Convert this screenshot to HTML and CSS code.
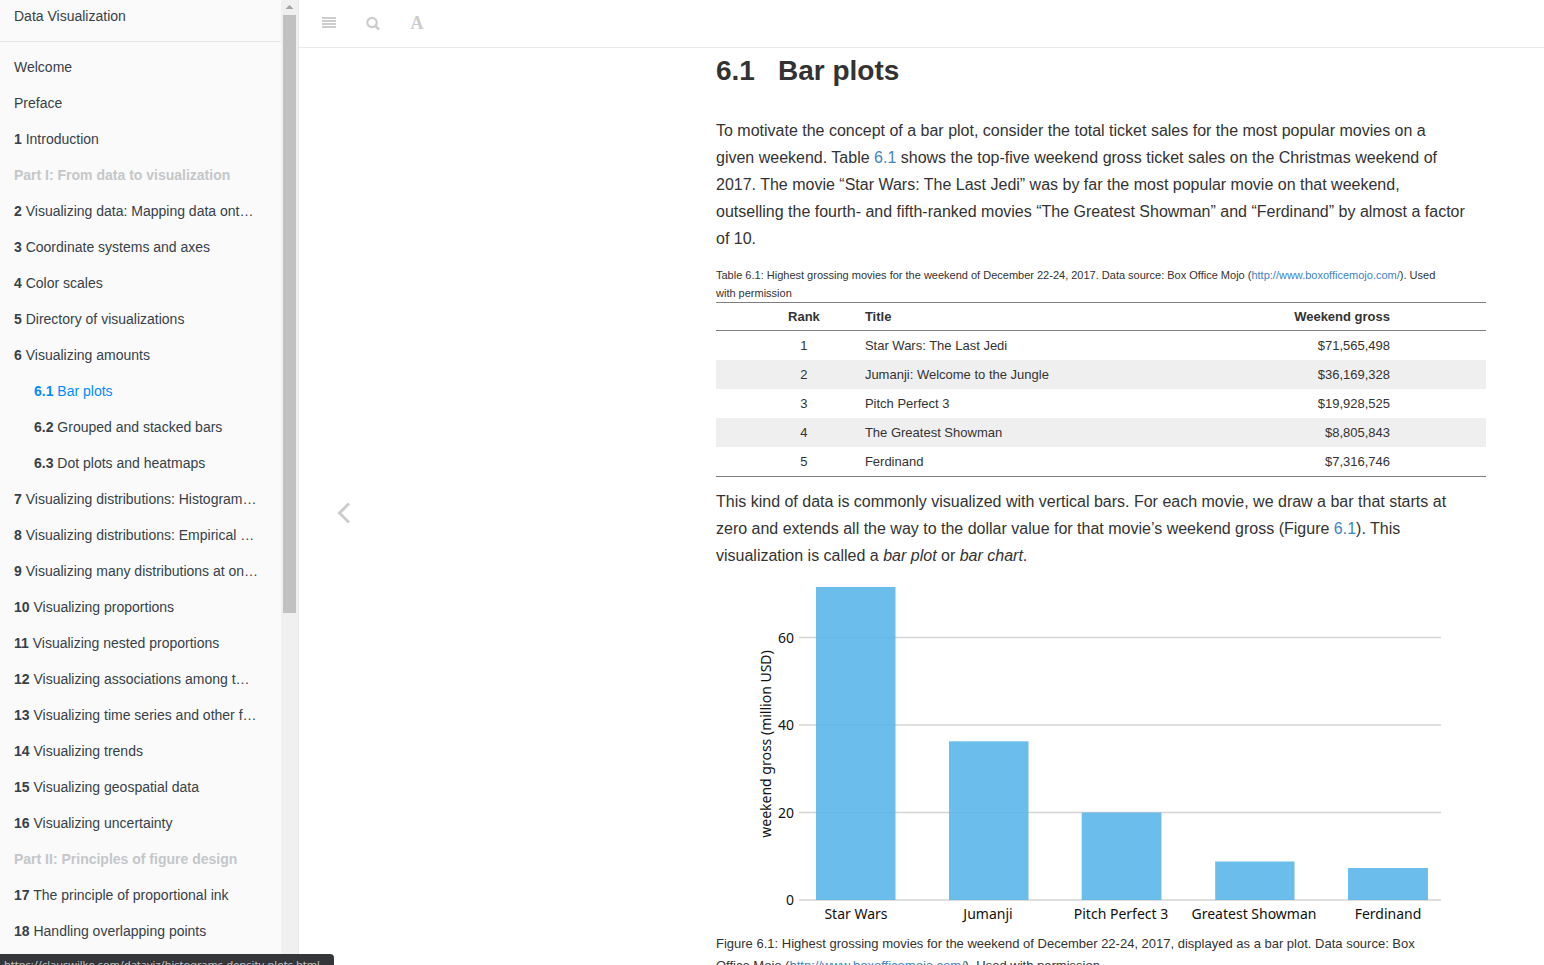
FILE: index.html
```html
<!DOCTYPE html>
<html lang="en">
<head>
<meta charset="utf-8">
<title>Data Visualization</title>
<link rel="stylesheet" href="styles.css">
</head>
<body>
<div class="book">
  <aside class="sidebar">
    <nav class="summary" aria-label="Contents">
      <a class="book-title" href="#">Data Visualization</a>
      <hr class="divider">
      <ul class="chapters">
        <li><a href="#">Welcome</a></li>
        <li><a href="#">Preface</a></li>
        <li><a href="#"><b>1</b> Introduction</a></li>
        <li class="part">Part I: From data to visualization</li>
        <li><a href="#"><b>2</b> Visualizing data: Mapping data ont…</a></li>
        <li><a href="#"><b>3</b> Coordinate systems and axes</a></li>
        <li><a href="#"><b>4</b> Color scales</a></li>
        <li><a href="#"><b>5</b> Directory of visualizations</a></li>
        <li><a href="#"><b>6</b> Visualizing amounts</a>
          <ul class="sections">
            <li class="active"><a href="#"><b>6.1</b> Bar plots</a></li>
            <li><a href="#"><b>6.2</b> Grouped and stacked bars</a></li>
            <li><a href="#"><b>6.3</b> Dot plots and heatmaps</a></li>
          </ul>
        </li>
        <li><a href="#"><b>7</b> Visualizing distributions: Histogram…</a></li>
        <li><a href="#"><b>8</b> Visualizing distributions: Empirical …</a></li>
        <li><a href="#"><b>9</b> Visualizing many distributions at on…</a></li>
        <li><a href="#"><b>10</b> Visualizing proportions</a></li>
        <li><a href="#"><b>11</b> Visualizing nested proportions</a></li>
        <li><a href="#"><b>12</b> Visualizing associations among t…</a></li>
        <li><a href="#"><b>13</b> Visualizing time series and other f…</a></li>
        <li><a href="#"><b>14</b> Visualizing trends</a></li>
        <li><a href="#"><b>15</b> Visualizing geospatial data</a></li>
        <li><a href="#"><b>16</b> Visualizing uncertainty</a></li>
        <li class="part">Part II: Principles of figure design</li>
        <li><a href="#"><b>17</b> The principle of proportional ink</a></li>
        <li><a href="#"><b>18</b> Handling overlapping points</a></li>
      </ul>
    </nav>
    <div class="scrollbar" aria-hidden="true">
      <svg class="scroll-up" viewBox="0 0 17 15"><path d="M4.500 9h8L8.500 5z" fill="#a3a3a3"/></svg>
      <div class="thumb"></div>
    </div>
  </aside>

  <div class="reader">
    <header class="toolbar">
      <button class="tool" type="button" aria-label="Toggle sidebar"><svg viewBox="0 0 14 14"><path d="M0 1h14v2H0zM0 4h14v2H0zM0 7h14v2H0zM0 10h14v2H0z" fill="currentColor"/></svg></button>
      <button class="tool" type="button" aria-label="Search"><svg viewBox="0 0 14 14"><circle cx="6" cy="6.500" r="4.700" fill="none" stroke="currentColor" stroke-width="2.200"/><path d="M9.300 9.800l3 3" stroke="currentColor" stroke-width="2.600" stroke-linecap="round"/></svg></button>
      <button class="tool tool-font" type="button" aria-label="Font settings">A</button>
    </header>
    <main class="page">
      <a class="previous" href="#" aria-label="Previous page"><svg viewBox="0 0 14 22"><path d="M12 1.500L2.500 11l9.500 9.500" fill="none" stroke="currentColor" stroke-width="3"/></svg></a>
      <article class="section">
        <h1><span class="number">6.1</span>Bar plots</h1>
        <p>To motivate the concept of a bar plot, consider the total ticket sales for the most popular movies on a<br>
        given weekend. Table <a href="#">6.1</a> shows the top-five weekend gross ticket sales on the Christmas weekend of<br>
        2017. The movie “Star Wars: The Last Jedi” was by far the most popular movie on that weekend,<br>
        outselling the fourth- and fifth-ranked movies “The Greatest Showman” and “Ferdinand” by almost a factor<br>
        of 10.</p>
        <table>
          <caption>Table 6.1: Highest grossing movies for the weekend of December 22-24, 2017. Data source: Box Office Mojo (<a href="#">http://www.boxofficemojo.com/</a>). Used<br>with permission</caption>
          <thead>
            <tr><th class="rank" scope="col">Rank</th><th class="title" scope="col">Title</th><th class="gross" scope="col">Weekend gross</th></tr>
          </thead>
          <tbody>
            <tr><td class="rank">1</td><td class="title">Star Wars: The Last Jedi</td><td class="gross">$71,565,498</td></tr>
            <tr><td class="rank">2</td><td class="title">Jumanji: Welcome to the Jungle</td><td class="gross">$36,169,328</td></tr>
            <tr><td class="rank">3</td><td class="title">Pitch Perfect 3</td><td class="gross">$19,928,525</td></tr>
            <tr><td class="rank">4</td><td class="title">The Greatest Showman</td><td class="gross">$8,805,843</td></tr>
            <tr><td class="rank">5</td><td class="title">Ferdinand</td><td class="gross">$7,316,746</td></tr>
          </tbody>
        </table>
        <p>This kind of data is commonly visualized with vertical bars. For each movie, we draw a bar that starts at<br>
        zero and extends all the way to the dollar value for that movie’s weekend gross (Figure <a href="#">6.1</a>). This<br>
        visualization is called a <em>bar plot</em> or <em>bar chart</em>.</p>
        <figure>
          <svg class="chart" viewBox="0 0 770 364" role="img" aria-label="Bar plot of weekend gross by movie">
            <g stroke="#d4d4d4" stroke-width="1.300">
              <path d="M83 68.500H725M83 156H725M83 243.500H725M83 331H725"/>
            </g>
            <g fill="#56b4e9" fill-opacity=".88">
              <rect x="100" y="18" width="79.500" height="313"/>
              <rect x="233" y="172.300" width="79.500" height="158.700"/>
              <rect x="365.700" y="243.500" width="79.700" height="87.500"/>
              <rect x="499.200" y="292.500" width="79.300" height="38.500"/>
              <rect x="632" y="299" width="80" height="32"/>
            </g>
            <g class="ticks" text-anchor="end">
              <text x="78" y="74">60</text>
              <text x="78" y="161">40</text>
              <text x="78" y="249">20</text>
              <text x="78" y="336">0</text>
            </g>
            <g class="ticks" text-anchor="middle">
              <text x="140" y="350">Star Wars</text>
              <text x="272" y="350">Jumanji</text>
              <text x="405" y="350">Pitch Perfect 3</text>
              <text x="538" y="350">Greatest Showman</text>
              <text x="672" y="350">Ferdinand</text>
            </g>
            <text class="axis" text-anchor="middle" transform="translate(55 175) rotate(-90)">weekend gross (million USD)</text>
          </svg>
          <figcaption>Figure 6.1: Highest grossing movies for the weekend of December 22-24, 2017, displayed as a bar plot. Data source: Box<br>Office Mojo (<a href="#">http://www.boxofficemojo.com/</a>). Used with permission</figcaption>
        </figure>
      </article>
    </main>
  </div>
</div>
<div class="status">https://clauswilke.com/dataviz/histograms-density-plots.html</div>
</body>
</html>
```
FILE: styles.css
```css
* { box-sizing: border-box; }
body {
  margin: 0;
  background: #fff;
  color: #333;
  font-family: "Liberation Sans", Arial, sans-serif;
  font-size: 16px;
  line-height: 27px;
}
a { color: #4183c4; text-decoration: none; }
ul { margin: 0; padding: 0; list-style: none; }
.book { display: flex; height: 100vh; overflow: hidden; }

/* Sidebar */
.sidebar {
  display: flex;
  flex: none;
  width: 299px;
  overflow: hidden;
  background: #fafafa;
  border-right: 1px solid #e7e7e7;
  color: #364149;
  font-size: 14px;
  line-height: 16px;
}
.summary { flex: 1; min-width: 0; }
.summary a, .part { display: block; padding: 10px 14px; color: #364149; white-space: nowrap; }
.summary .book-title { padding-top: 8px; }
.divider { height: 1px; margin: 7px 0; border: 0; background: #e4e4e4; }
.summary .sections a { padding-left: 34px; }
.summary .active a { color: #008cff; }
.summary .part { color: #c4c7c9; font-weight: bold; }
.scrollbar { flex: none; width: 17px; padding-right: 2px; padding-left: 2px; background: #f0f0f0; }
.scroll-up { display: block; width: 17px; height: 15px; margin-left: -2px; }
.thumb { height: 62%; background: #c1c1c1; }

/* Reading area */
.reader { display: flex; flex: 1; flex-direction: column; min-width: 0; }
.toolbar { display: flex; flex: none; gap: 30px; align-items: center; height: 48px; padding: 0 0 1px 23px; border-bottom: 1px solid #eaeaea; }
.tool { width: 14px; height: 14px; padding: 0; border: 0; background: none; color: #ccc; }
.tool svg { display: block; width: 14px; height: 14px; }
.tool-font { font: bold 18px/14px "Liberation Serif", serif; }
.page { display: flex; flex: 1; justify-content: space-between; min-height: 0; padding: 0 58px 0 38px; overflow: hidden; }
.previous { align-self: center; padding-top: 12px; color: #ccc; }
.previous svg { display: block; width: 14px; height: 22px; }
.section { width: 770px; }
h1 { margin: 0; padding: 5px 0 29px; font-size: 28px; line-height: 35px; }
.number { margin-right: 23px; }
p { margin: 0 0 14px; }

table { width: 100%; margin-bottom: 11px; border-bottom: 1px solid #7f7f7f; border-spacing: 0; font-size: 13px; line-height: 17px; }
caption { font-size: 11px; line-height: 18px; text-align: left; }
th, td { padding: 6px 0; text-align: left; }
th { padding: 5px 0; border-top: 1px solid #7f7f7f; border-bottom: 1px solid #7f7f7f; }
tbody tr:nth-child(even) { background: #efefef; }
.rank { width: 17%; padding-left: 45px; text-align: center; }
.title { padding-left: 18px; }
.gross { padding-right: 96px; text-align: right; }

table + p { margin: 0; }
figure { margin: 0; }
.chart { display: block; width: 100%; }
.ticks, .axis { fill: #111; font-family: "Noto Sans", sans-serif; font-size: 14px; }
figcaption { font-size: 13px; line-height: 22px; }

/* Link target shown over the page corner */
.status {
  position: fixed;
  bottom: 0;
  left: 0;
  width: 334px;
  height: 11px;
  padding: 2px 4px;
  overflow: hidden;
  border-radius: 0 4px 0 0;
  background: #35363a;
  color: #bdc1c6;
  font: 11px/18px "Noto Sans", sans-serif;
  white-space: nowrap;
}
```
